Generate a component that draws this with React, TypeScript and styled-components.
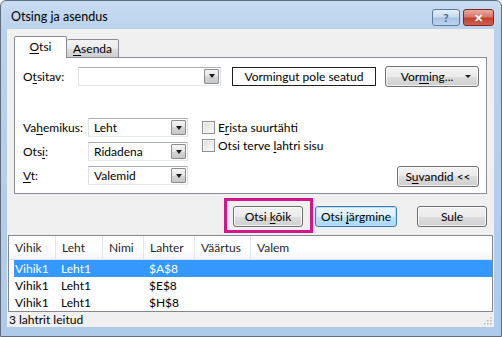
import React from 'react'
import styled, { createGlobalStyle, css } from 'styled-components'

const GlobalStyle = createGlobalStyle`
  html, body { margin: 0; padding: 0; }
  body {
    width: 502px;
    height: 337px;
    overflow: hidden;
    background: #ffffff;
    font-family: Lato, "Noto Sans", sans-serif;
    font-size: 12px;
    color: #1b1b1b;
  }
  * { box-sizing: border-box; }
  u { text-decoration: underline; text-underline-offset: 2px; }
`

const Window = styled.div`
  width: 502px;
  height: 337px;
  display: flex;
  flex-direction: column;
  background: linear-gradient(#c8dcf1, #b9d2eb 30px, #aecbe9);
  border: 1px solid #5e6d80;
  border-radius: 6px 6px 0 0;
  padding: 0 7px 9px 6px;
`

const TitleBar = styled.div`
  height: 28px;
  display: flex;
  align-items: flex-start;
  padding-left: 4px;
`

const Title = styled.div`
  flex: 1;
  padding-top: 8px;
  font-size: 12.5px;
  color: #000;
`

const Caption = styled.div<{ $close?: boolean }>`
  margin-top: 8px;
  height: 17px;
  width: ${p => (p.$close ? 31 : 28)}px;
  margin-left: ${p => (p.$close ? 3 : 0)}px;
  border: 1px solid ${p => (p.$close ? '#7a2a22' : '#5b7a9e')};
  border-radius: 3px;
  display: flex;
  align-items: center;
  justify-content: center;
  font-weight: bold;
  font-size: 11px;
  ${p =>
    p.$close
      ? css`
          background: linear-gradient(#eaa89d, #d9776b 45%, #c4402f 55%, #d2604f);
          color: #fff;
        `
      : css`
          background: linear-gradient(#e4eef9, #c9dbef 45%, #a9c4e3 55%, #bcd4ee);
          color: #3d5e86;
        `}
`

const Client = styled.div`
  flex: 1;
  background: #f0f0f0;
  display: flex;
  flex-direction: column;
`

const TabStrip = styled.div`
  display: flex;
  align-items: flex-end;
  padding: 7px 7px 0;
  height: 29px;
  position: relative;
  z-index: 1;
  margin-bottom: -1px;
`

const Tab = styled.div<{ $active?: boolean }>`
  width: ${p => (p.$active ? 53 : 52)}px;
  height: ${p => (p.$active ? 22 : 19)}px;
  border: 1px solid #898c95;
  border-bottom: ${p => (p.$active ? 'none' : '1px solid #898c95')};
  border-left: ${p => (p.$active ? '1px solid #898c95' : 'none')};
  border-radius: 2px 2px 0 0;
  background: ${p => (p.$active ? '#ffffff' : 'linear-gradient(#f3f3f3, #ebebeb 50%, #dddddd 50%, #cfcfcf)')};
  display: flex;
  align-items: center;
  justify-content: center;
  padding-bottom: ${p => (p.$active ? 2 : 0)}px;
  color: #000;
`

const Panel = styled.div`
  margin: 0 7px;
  height: 137px;
  background: #ffffff;
  border: 1px solid #898c95;
  padding: 8px 7px 0 8px;
  display: flex;
  flex-direction: column;
`

const FindRow = styled.div`
  display: flex;
  align-items: center;
  height: 20px;
`

const Label = styled.div<{ $w: number }>`
  width: ${p => p.$w}px;
  color: #000;
`

const Combo = styled.div<{ $w: number }>`
  width: ${p => p.$w}px;
  height: 19px;
  display: flex;
  border: 1px solid #abadb3;
  border-color: #abadb3 #dbdfe6 #e3e9ef #e2e3ea;
  background: #ffffff;
  padding: 1px;
`

const ComboText = styled.div`
  flex: 1;
  padding-left: 4px;
  line-height: 15px;
  color: #000;
`

const ArrowBtn = styled.div`
  width: 15px;
  border: 1px solid #8b8b8b;
  border-radius: 1px;
  background: linear-gradient(#f4f4f4, #e5e5e5 50%, #d5d5d5 50%, #c8c8c8);
  display: flex;
  align-items: center;
  justify-content: center;
`

const Tri = styled.span`
  width: 0;
  height: 0;
  border-left: 3.5px solid transparent;
  border-right: 3.5px solid transparent;
  border-top: 4px solid #1a1a1a;
`

const FormatBox = styled.div`
  width: 144px;
  height: 19px;
  margin-left: 11px;
  border: 1px solid #202020;
  background: #ffffff;
  display: flex;
  align-items: center;
  justify-content: center;
  color: #000;
`

const Button = styled.div<{ $w: number; $default?: boolean }>`
  width: ${p => p.$w}px;
  height: 21px;
  border: 1px solid ${p => (p.$default ? '#3c7fb1' : '#707070')};
  border-radius: 3px;
  background: ${p =>
    p.$default
      ? 'linear-gradient(#eaf6fd, #d9f0fc 50%, #bee6fd 50%, #a7d9f5)'
      : 'linear-gradient(#f2f2f2, #ebebeb 50%, #dddddd 50%, #cfcfcf)'};
  box-shadow: inset 0 0 0 1px ${p => (p.$default ? '#b6dcf4' : 'rgba(255,255,255,0.7)')};
  display: flex;
  align-items: center;
  justify-content: center;
  color: #000;
  position: relative;
`

const SmallArrow = styled.span`
  position: absolute;
  right: 7px;
  top: 8px;
  width: 0;
  height: 0;
  border-left: 3px solid transparent;
  border-right: 3px solid transparent;
  border-top: 3px solid #1a1a1a;
`

const Options = styled.div`
  margin-top: 32px;
  display: flex;
  align-items: flex-start;
`

const OptGrid = styled.div`
  display: grid;
  grid-template-columns: 65px 100px;
  grid-auto-rows: 19px;
  row-gap: 5px;
  align-items: center;
`

const Checks = styled.div`
  margin-left: 14px;
  padding-top: 3px;
  display: flex;
  flex-direction: column;
  gap: 5px;
`

const CheckRow = styled.div`
  display: flex;
  align-items: center;
  height: 13px;
  gap: 3px;
  color: #000;
`

const CheckBox = styled.span`
  width: 13px;
  height: 13px;
  border: 1px solid #8e8f8f;
  background: linear-gradient(135deg, #dcdcdc, #fbfbfb);
  box-shadow: inset 0 0 0 1px #f4f4f4;
`

const Spacer = styled.div`
  flex: 1;
`

const SuvandidWrap = styled.div`
  align-self: flex-end;
  margin-bottom: -2px;
`

const ButtonRow = styled.div`
  margin-top: 4px;
  height: 35px;
  display: flex;
  align-items: flex-start;
  justify-content: flex-end;
  padding-right: 7px;
`

const Highlight = styled.div`
  width: 89px;
  height: 35px;
  border: 3px solid #d4168a;
  padding: 5px 0 0 6px;
`

const RowBtn = styled.div<{ $ml: number }>`
  margin-left: ${p => p.$ml}px;
  margin-top: 8px;
`

const List = styled.div`
  margin: 2px 1px 0;
  height: 77px;
  border: 1px solid #828790;
  background: #ffffff;
  display: flex;
  flex-direction: column;
`

const cols = css`
  display: grid;
  grid-template-columns: 47px 47px 41px 51px 56px 1fr;
`

const Header = styled.div`
  ${cols};
  height: 24px;
  background: linear-gradient(#ffffff 60%, #f3f4f6);
  border-bottom: 1px solid #e5e5e5;
`

const HeadCell = styled.div`
  padding-left: 6px;
  display: flex;
  align-items: center;
  border-right: 1px solid #e3e5e8;
  color: #1e1e1e;
  &:last-child { border-right: none; }
`

const Row = styled.div<{ $sel?: boolean }>`
  display: grid;
  grid-template-columns: 41px 47px 41px 51px 56px 1fr;
  margin-left: 5px;
  height: 17px;
  align-items: center;
  background: ${p => (p.$sel ? '#3399ff' : 'transparent')};
  color: ${p => (p.$sel ? '#ffffff' : '#000000')};
`

const Cell = styled.div`
  padding-left: 6px;
  &:first-child { padding-left: 1px; }
`

const Status = styled.div`
  flex: 1;
  display: flex;
  align-items: center;
  justify-content: space-between;
  padding: 0 2px 0 2px;
  color: #000;
`

const Grip = () => (
  <svg width="10" height="10" viewBox="0 0 10 10" style={{ alignSelf: 'flex-end', marginBottom: 2 }}>
    {[
      [8, 2],
      [5, 5],
      [8, 5],
      [2, 8],
      [5, 8],
      [8, 8],
    ].map(([x, y], i) => (
      <rect key={i} x={x} y={y} width="1.5" height="1.5" fill="#b8b8b8" />
    ))}
  </svg>
)

const results = [
  { book: 'Vihik1', sheet: 'Leht1', cell: '$A$8', sel: true },
  { book: 'Vihik1', sheet: 'Leht1', cell: '$E$8' },
  { book: 'Vihik1', sheet: 'Leht1', cell: '$H$8' },
]

const App: React.FC = () => {
  return (
    <>
      <GlobalStyle />
      <Window>
        <TitleBar>
          <Title>Otsing ja asendus</Title>
          <Caption>?</Caption>
          <Caption $close>✕</Caption>
        </TitleBar>
        <Client>
          <TabStrip>
            <Tab $active>
              <span><u>O</u>tsi</span>
            </Tab>
            <Tab>
              <span><u>A</u>senda</span>
            </Tab>
          </TabStrip>
          <Panel>
            <FindRow>
              <Label $w={55}>O<u>t</u>sitav:</Label>
              <Combo $w={143}>
                <ComboText />
                <ArrowBtn><Tri /></ArrowBtn>
              </Combo>
              <FormatBox>Vormingut pole seatud</FormatBox>
              <Button $w={94} style={{ marginLeft: 9 }}>
                <span style={{ marginRight: 10 }}>Vor<u>m</u>ing...</span>
                <SmallArrow />
              </Button>
            </FindRow>
            <Options>
              <OptGrid>
                <Label $w={65}>Va<u>h</u>emikus:</Label>
                <Combo $w={100}>
                  <ComboText>Leht</ComboText>
                  <ArrowBtn><Tri /></ArrowBtn>
                </Combo>
                <Label $w={65}>Ots<u>i</u>:</Label>
                <Combo $w={100}>
                  <ComboText>Ridadena</ComboText>
                  <ArrowBtn><Tri /></ArrowBtn>
                </Combo>
                <Label $w={65}><u>V</u>t:</Label>
                <Combo $w={100}>
                  <ComboText>Valemid</ComboText>
                  <ArrowBtn><Tri /></ArrowBtn>
                </Combo>
              </OptGrid>
              <Checks>
                <CheckRow>
                  <CheckBox />
                  <span>E<u>r</u>ista suurtähti</span>
                </CheckRow>
                <CheckRow>
                  <CheckBox />
                  <span>Otsi terve <u>l</u>ahtri sisu</span>
                </CheckRow>
              </Checks>
              <Spacer />
              <SuvandidWrap>
                <Button $w={82}><span>S<u>u</u>vandid &lt;&lt;</span></Button>
              </SuvandidWrap>
            </Options>
          </Panel>
          <ButtonRow>
            <Highlight>
              <Button $w={70}><span>Otsi <u>k</u>õik</span></Button>
            </Highlight>
            <RowBtn $ml={2}>
              <Button $w={82} $default><span>Otsi <u>j</u>ärgmine</span></Button>
            </RowBtn>
            <RowBtn $ml={20}>
              <Button $w={70}>Sule</Button>
            </RowBtn>
          </ButtonRow>
          <List>
            <Header>
              <HeadCell>Vihik</HeadCell>
              <HeadCell>Leht</HeadCell>
              <HeadCell>Nimi</HeadCell>
              <HeadCell>Lahter</HeadCell>
              <HeadCell>Väärtus</HeadCell>
              <HeadCell>Valem</HeadCell>
            </Header>
            {results.map((r, i) => (
              <Row key={i} $sel={r.sel}>
                <Cell>{r.book}</Cell>
                <Cell>{r.sheet}</Cell>
                <Cell />
                <Cell>{r.cell}</Cell>
                <Cell />
                <Cell />
              </Row>
            ))}
          </List>
          <Status>
            <span>3 lahtrit leitud</span>
            <Grip />
          </Status>
        </Client>
      </Window>
    </>
  )
}

export default App
